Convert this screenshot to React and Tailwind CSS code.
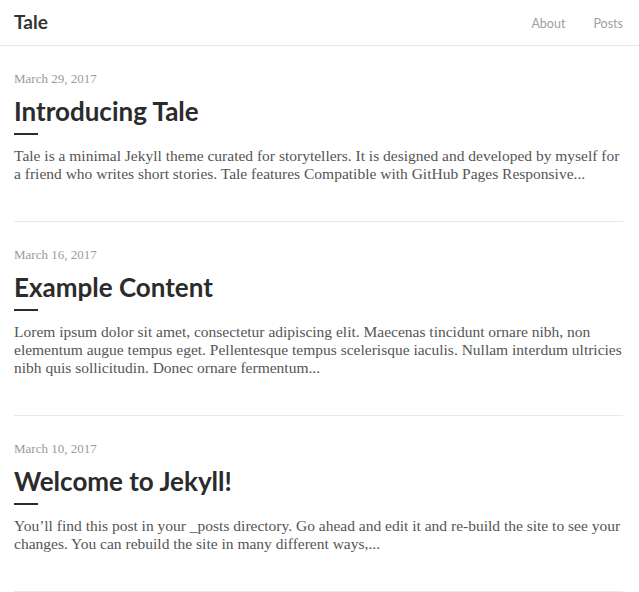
const posts = [
  {
    date: 'March 29, 2017',
    title: 'Introducing Tale',
    excerpt:
      'Tale is a minimal Jekyll theme curated for storytellers. It is designed and developed by myself for a friend who writes short stories. Tale features Compatible with GitHub Pages Responsive...',
  },
  {
    date: 'March 16, 2017',
    title: 'Example Content',
    excerpt:
      'Lorem ipsum dolor sit amet, consectetur adipiscing elit. Maecenas tincidunt ornare nibh, non elementum augue tempus eget. Pellentesque tempus scelerisque iaculis. Nullam interdum ultricies nibh quis sollicitudin. Donec ornare fermentum...',
  },
  {
    date: 'March 10, 2017',
    title: 'Welcome to Jekyll!',
    excerpt:
      'You\u2019ll find this post in your _posts directory. Go ahead and edit it and re-build the site to see your changes. You can rebuild the site in many different ways,...',
  },
]

const sans = "font-['Lato','Open_Sans',sans-serif]"
const serif = "font-['Liberation_Serif','DejaVu_Serif',serif]"

const PostItem = ({ post }) => (
  <article className="pt-[24px] pb-[38px] border-b border-[#e8e8e8]">
    <div className={`${serif} text-[13px] leading-[18px] text-[#9a9a9a]`}>{post.date}</div>
    <h2 className={`${sans} mt-[7px] text-[26px] leading-[32px] font-bold text-[#2b2b2b]`}>
      {post.title}
    </h2>
    <div className="mt-[6px] w-[24px] h-[2px] bg-[#2b2b2b]" />
    <p className={`${serif} mt-[12px] text-[15.5px] leading-[18px] text-[#555]`}>
      {post.excerpt}
    </p>
  </article>
)

export default function App() {
  return (
    <div className="bg-white min-h-screen">
      {/* Header */}
      <header className="flex items-center justify-between h-[46px] pl-[14px] pr-[16px] border-b border-[#e8e8e8]">
        <a className={`${sans} text-[19px] font-bold text-[#333]`}>Tale</a>
        <nav className={`${sans} flex gap-[28px] pt-[3px] text-[12.5px] text-[#a0a0a0]`}>
          <a>About</a>
          <a>Posts</a>
        </nav>
      </header>

      {/* Posts */}
      <main className="pl-[14px] pr-[16px]">
        {posts.map((post) => (
          <PostItem key={post.title} post={post} />
        ))}
      </main>
    </div>
  )
}
